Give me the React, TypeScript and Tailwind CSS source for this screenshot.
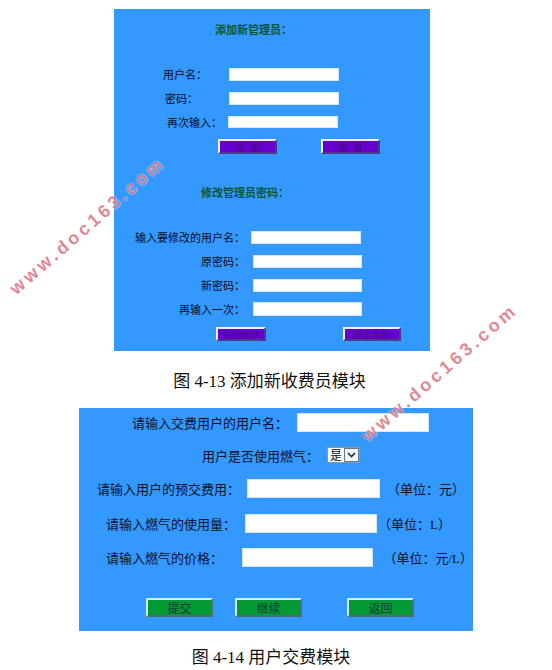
import React from "react";

const cjk = "font-['Noto_Sans_CJK_SC',sans-serif]";

function Field({ w, h, ml = 0 }: { w: number; h: number; ml?: number }) {
  return (
    <div
      className="bg-white border border-[#d6e6f7] shrink-0"
      style={{ width: w, height: h, marginLeft: ml }}
    />
  );
}

function PurpleBtn({ label, w, wide }: { label: string; w: number; wide?: boolean }) {
  return (
    <div
      className={`h-full bg-[#6600cc] border-2 border-t-[#f0f0ff] border-l-[#f0f0ff] border-b-[#4a3a8a] border-r-[#4a3a8a] flex items-center justify-center whitespace-nowrap leading-none text-[#4b0a8a] ${
        wide ? "text-[10px] tracking-[5px] pl-[5px]" : "text-[9px] tracking-[0.5px]"
      }`}
      style={{ width: w }}
    >
      {label}
    </div>
  );
}

function GreenBtn({ label }: { label: string }) {
  return (
    <div className="w-[67px] h-full bg-[#009933] border-2 border-t-[#d8ecff] border-l-[#d8ecff] border-b-[#4f6f6f] border-r-[#4f6f6f] flex items-center justify-center text-[12px] leading-none text-[#103a3a]">
      {label}
    </div>
  );
}

function Watermark({ x, y }: { x: number; y: number }) {
  return (
    <span
      className="absolute -translate-x-1/2 -translate-y-1/2 -rotate-[41deg] whitespace-nowrap font-['Liberation_Sans',sans-serif] font-bold text-[18px] tracking-[3.5px] text-[rgba(205,55,75,0.62)] [text-shadow:0_0_2px_#ffffff] pointer-events-none"
      style={{ left: x, top: y }}
    >
      www.doc163.com
    </span>
  );
}

function AdminPanel() {
  return (
    <div className={`ml-[114px] mt-[9px] w-[316px] h-[342px] bg-[#3399ff] flex flex-col text-[11px] leading-none text-[#0a0a20] ${cjk}`}>
      <h2 className="ml-[101px] mt-[14px] h-[12px] flex items-center font-bold text-[#0b5535]">
        添加新管理员：
      </h2>

      <div className="mt-[33px] h-[13px] flex items-center">
        <span className="ml-[49px] w-[66px]">用户名：</span>
        <Field w={110} h={13} />
      </div>
      <div className="mt-[11px] h-[13px] flex items-center">
        <span className="ml-[51px] w-[64px]">密码：</span>
        <Field w={110} h={13} />
      </div>
      <div className="mt-[11px] h-[12px] flex items-center">
        <span className="ml-[53px] w-[61px]">再次输入：</span>
        <Field w={110} h={12} />
      </div>
      <div className="mt-[11px] h-[15px] flex ml-[104px] gap-[44px]">
        <PurpleBtn label="添加" w={59} wide />
        <PurpleBtn label="重置" w={59} wide />
      </div>

      <h2 className="ml-[87px] mt-[32px] h-[12px] flex items-center font-bold text-[#0b5535]">
        修改管理员密码：
      </h2>

      <div className="mt-[33px] h-[13px] flex items-center">
        <span className="ml-[17px] w-[114px] text-right whitespace-nowrap">输入要修改的用户名：</span>
        <Field w={110} h={13} ml={6} />
      </div>
      <div className="mt-[11px] h-[13px] flex items-center">
        <span className="ml-[17px] w-[114px] text-right">原密码：</span>
        <Field w={109} h={13} ml={8} />
      </div>
      <div className="mt-[11px] h-[13px] flex items-center">
        <span className="ml-[17px] w-[114px] text-right">新密码：</span>
        <Field w={109} h={13} ml={8} />
      </div>
      <div className="mt-[10px] h-[14px] flex items-center">
        <span className="ml-[17px] w-[114px] text-right">再输入一次：</span>
        <Field w={109} h={14} ml={8} />
      </div>
      <div className="mt-[11px] h-[14px] flex ml-[102px]">
        <PurpleBtn label="保存修改" w={50} />
        <div className="ml-[77px] h-full">
          <PurpleBtn label="退出系统" w={58} />
        </div>
      </div>
    </div>
  );
}

function PaymentPanel() {
  return (
    <div className={`ml-[79px] w-[394px] h-[223px] bg-[#3399ff] flex flex-col text-[13px] leading-none text-[#101028] ${cjk}`}>
      <div className="mt-[5px] h-[19px] flex items-center">
        <span className="ml-[53px] w-[160px] whitespace-nowrap">请输入交费用户的用户名：</span>
        <Field w={132} h={19} ml={5} />
      </div>

      <div className="mt-[15px] h-[16px] flex items-center">
        <span className="ml-[123px] w-[120px] whitespace-nowrap">用户是否使用燃气：</span>
        <div className="ml-[5px] h-[16px] w-[33px] flex items-center justify-between bg-white border border-[#8a9aaa]">
          <span className="pl-[2px] text-[12px] text-[#111]">是</span>
          <div className="h-[14px] w-[15px] border border-[#6a7a8a] bg-[#f4f6f8] flex items-center justify-center">
            <svg width="9" height="6" viewBox="0 0 9 6">
              <path d="M1 1 L4.5 4.5 L8 1" fill="none" stroke="#1a2a4a" strokeWidth="1.6" />
            </svg>
          </div>
        </div>
      </div>

      <div className="mt-[16px] h-[19px] flex items-center">
        <span className="ml-[18px] w-[145px] whitespace-nowrap">请输入用户的预交费用：</span>
        <Field w={133} h={19} ml={5} />
        <span className="ml-[7px] whitespace-nowrap">（单位：元）</span>
      </div>

      <div className="mt-[16px] h-[19px] flex items-center">
        <span className="ml-[27px] w-[139px] whitespace-nowrap">请输入燃气的使用量：</span>
        <Field w={132} h={19} />
        <span className="ml-[1px] whitespace-nowrap">（单位：<span className="font-['Liberation_Serif',serif]">L</span>）</span>
      </div>

      <div className="mt-[15px] h-[19px] flex items-center">
        <span className="ml-[27px] w-[141px] whitespace-nowrap">请输入燃气的价格：</span>
        <Field w={131} h={19} />
        <span className="ml-[10px] whitespace-nowrap">（单位：元<span className="font-['Liberation_Serif',serif]">/L</span>）</span>
      </div>

      <div className="mt-[31px] h-[19px] flex ml-[67px]">
        <GreenBtn label="提交" />
        <div className="ml-[22px] h-full">
          <GreenBtn label="继续" />
        </div>
        <div className="ml-[45px] h-full">
          <GreenBtn label="返回" />
        </div>
      </div>
    </div>
  );
}

function Caption({ text, num }: { text: string; num: string }) {
  return (
    <p className="h-[20px] flex items-center justify-center text-[17px] leading-none text-[#111] font-['Liberation_Serif','Noto_Sans_CJK_SC',serif]">
      图 {num} {text}
    </p>
  );
}

export default function App() {
  return (
    <div className="relative w-[552px] h-[670px] bg-white overflow-hidden">
      <AdminPanel />
      <div className="mt-[20px] pr-[13px]">
        <Caption num="4-13" text="添加新收费员模块" />
      </div>
      <div className="mt-[17px]">
        <PaymentPanel />
      </div>
      <div className="mt-[16px] pr-[10px]">
        <Caption num="4-14" text="用户交费模块" />
      </div>

      <Watermark x={88} y={226} />
      <Watermark x={440} y={373} />
    </div>
  );
}
